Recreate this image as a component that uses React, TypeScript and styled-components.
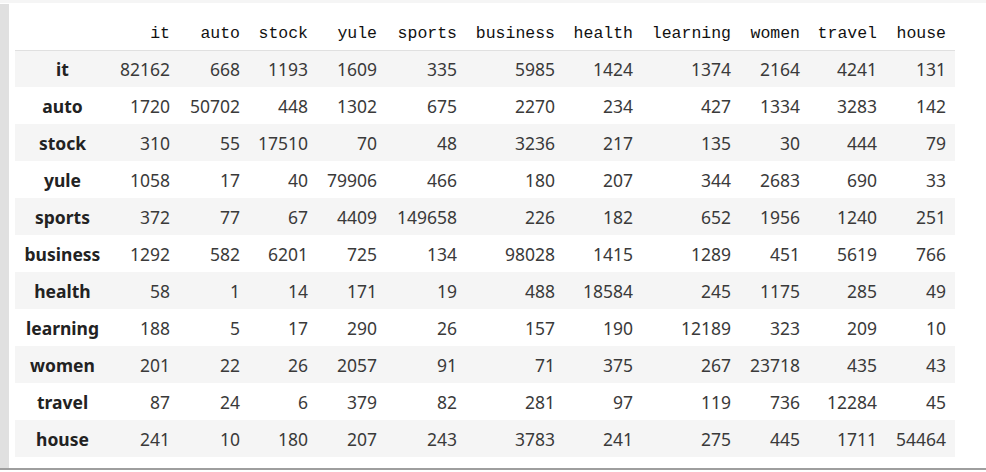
import React from "react";
import styled, { createGlobalStyle } from "styled-components";

const GlobalStyle = createGlobalStyle`
  html, body {
    margin: 0;
    padding: 0;
    background: #ffffff;
  }
  body {
    font-family: "Noto Sans", "Noto Sans CJK SC", sans-serif;
  }
`;

const columns = [
  "it",
  "auto",
  "stock",
  "yule",
  "sports",
  "business",
  "health",
  "learning",
  "women",
  "travel",
  "house",
];

const colWidths = [95, 69, 70, 68, 69, 80, 98, 78, 98, 69, 77, 69];

const data: number[][] = [
  [82162, 668, 1193, 1609, 335, 5985, 1424, 1374, 2164, 4241, 131],
  [1720, 50702, 448, 1302, 675, 2270, 234, 427, 1334, 3283, 142],
  [310, 55, 17510, 70, 48, 3236, 217, 135, 30, 444, 79],
  [1058, 17, 40, 79906, 466, 180, 207, 344, 2683, 690, 33],
  [372, 77, 67, 4409, 149658, 226, 182, 652, 1956, 1240, 251],
  [1292, 582, 6201, 725, 134, 98028, 1415, 1289, 451, 5619, 766],
  [58, 1, 14, 171, 19, 488, 18584, 245, 1175, 285, 49],
  [188, 5, 17, 290, 26, 157, 190, 12189, 323, 209, 10],
  [201, 22, 26, 2057, 91, 71, 375, 267, 23718, 435, 43],
  [87, 24, 6, 379, 82, 281, 97, 119, 736, 12284, 45],
  [241, 10, 180, 207, 243, 3783, 241, 275, 445, 1711, 54464],
];

const Page = styled.div`
  width: 986px;
  height: 472px;
  overflow: hidden;
  background: #ffffff;
`;

const TopBand = styled.div`
  height: 3px;
  margin-bottom: 1px;
  background: #f5f5f5;
`;

const OutputRow = styled.div`
  display: flex;
  height: 466px;
  border-bottom: 2px solid #9e9e9e;
  box-sizing: border-box;
`;

const Gutter = styled.div`
  width: 9px;
  flex: none;
  background: #e0e0e0;
`;

const OutputArea = styled.div`
  flex: 1;
  padding: 9px 0 13px 6px;
`;

const DataTable = styled.table`
  border-collapse: collapse;
  border-spacing: 0;
  table-layout: fixed;
  width: 940px;
  color: #333333;
`;

const HeadRow = styled.tr`
  border-bottom: 1px solid #e0e0e0;
`;

const HeadCell = styled.th`
  height: 37px;
  padding: 4px 9px 0 0;
  box-sizing: border-box;
  text-align: right;
  vertical-align: middle;
  font-family: "Liberation Mono", "DejaVu Sans Mono", monospace;
  font-size: 16.5px;
  font-weight: normal;
  color: #111111;
  white-space: nowrap;
`;

const BodyRow = styled.tr<{ $striped: boolean }>`
  background: ${(p) => (p.$striped ? "#f5f5f5" : "#ffffff")};
`;

const IndexCell = styled.th`
  height: 37px;
  padding: 0;
  box-sizing: border-box;
  text-align: center;
  vertical-align: middle;
  font-family: "Noto Sans", "Noto Sans CJK SC", sans-serif;
  font-size: 17.5px;
  font-weight: bold;
  color: #222222;
  white-space: nowrap;
`;

const Cell = styled.td`
  height: 37px;
  padding: 0 9px 0 0;
  box-sizing: border-box;
  text-align: right;
  vertical-align: middle;
  font-family: "Noto Sans", "Noto Sans CJK SC", sans-serif;
  font-size: 17.5px;
  color: #3a3a3a;
  white-space: nowrap;
`;

export default function App() {
  return (
    <Page>
      <GlobalStyle />
      <TopBand />
      <OutputRow>
        <Gutter />
        <OutputArea>
          <DataTable>
            <colgroup>
              {colWidths.map((w, i) => (
                <col key={i} style={{ width: w }} />
              ))}
            </colgroup>
            <thead>
              <HeadRow>
                <HeadCell />
                {columns.map((c) => (
                  <HeadCell key={c}>{c}</HeadCell>
                ))}
              </HeadRow>
            </thead>
            <tbody>
              {data.map((row, r) => (
                <BodyRow key={columns[r]} $striped={r % 2 === 0}>
                  <IndexCell>{columns[r]}</IndexCell>
                  {row.map((v, c) => (
                    <Cell key={c}>{v}</Cell>
                  ))}
                </BodyRow>
              ))}
            </tbody>
          </DataTable>
        </OutputArea>
      </OutputRow>
    </Page>
  );
}
